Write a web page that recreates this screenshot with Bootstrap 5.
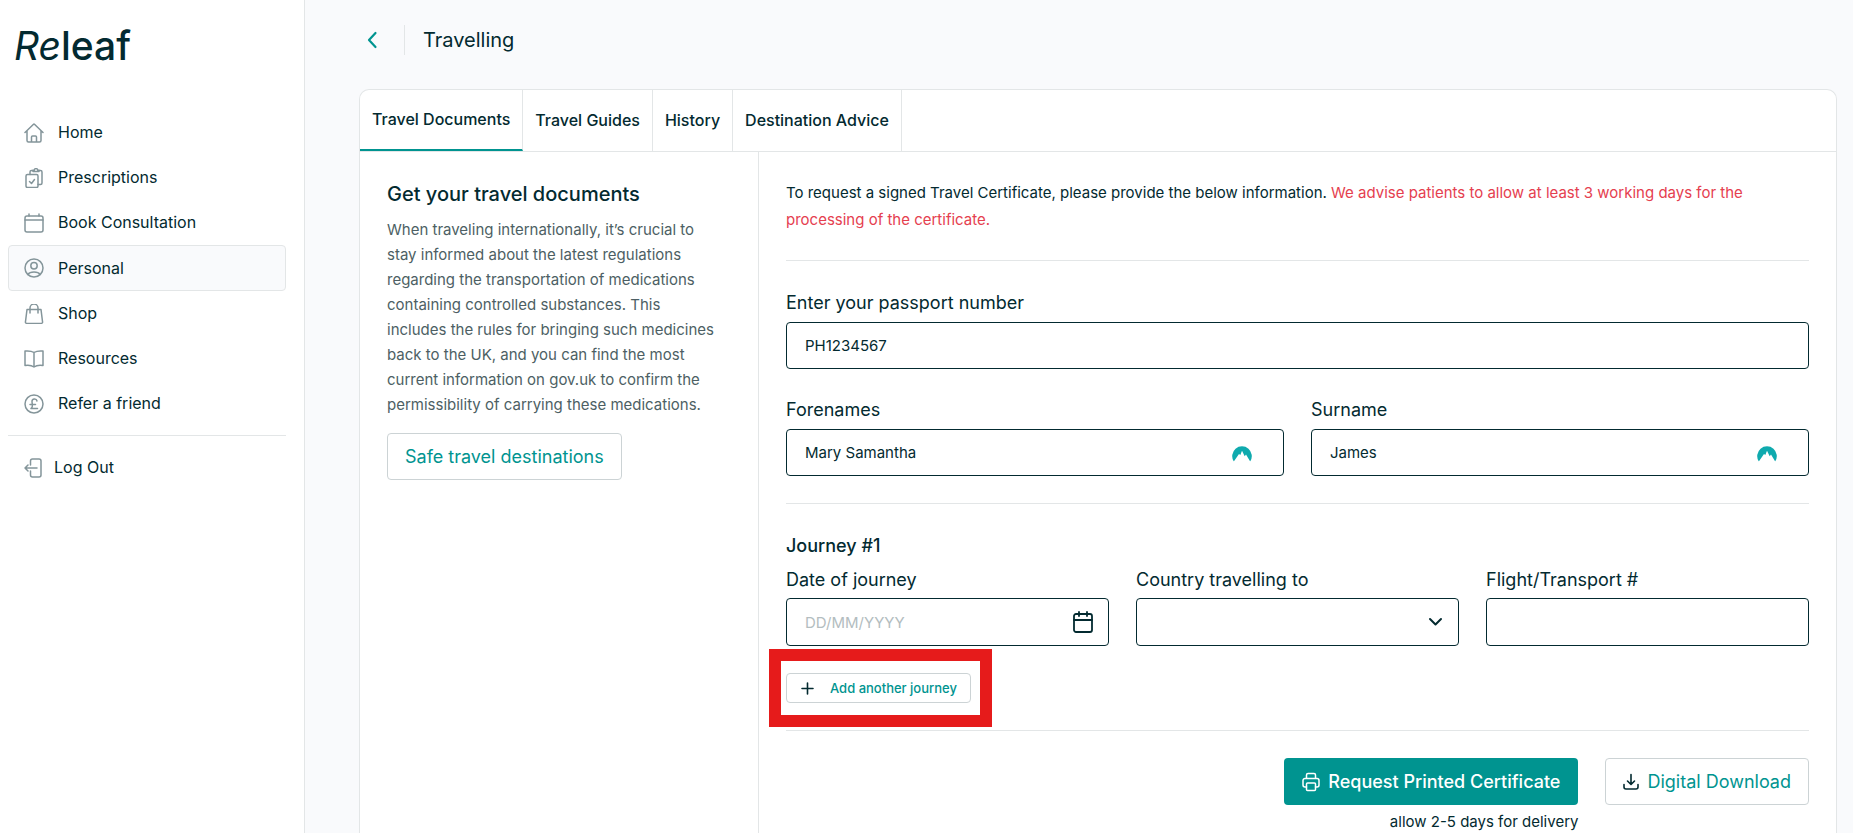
<!DOCTYPE html>
<html lang="en">
<head>
<meta charset="utf-8">
<meta name="viewport" content="width=device-width, initial-scale=1">
<title>Releaf - Travelling</title>
<link href="https://cdn.jsdelivr.net/npm/bootstrap@5.3.0/dist/css/bootstrap.min.css" rel="stylesheet">
<style>
  :root { --ink: #032a30; --teal: #009490; --line: #e3e6e7; --soft: #f9fafc; --gutter: 27px; }
  body { font-family: Inter, "Open Sans", sans-serif; font-size: 15px; line-height: 27px; color: var(--ink); background: var(--soft); }
  svg { display: block; flex: none; fill: none; stroke: currentColor; stroke-linecap: round; stroke-linejoin: round; }
  hr { margin: var(--gutter) 0; border-color: var(--line); opacity: 1; }
  .sidebar { flex: 0 0 305px; border-right: 1px solid var(--line); padding: 24px 18px 0 8px; }
  .logo { font-size: 39px; line-height: 44px; font-weight: 500; padding-left: 6px; margin-bottom: 42px; color: var(--ink); }
  .logo i { font-weight: 400; }
  .side-link { display: flex; align-items: center; gap: 14px; height: 45px; padding: 0 15px; border: 1px solid transparent; border-radius: 4px; color: var(--ink); font-size: 16px; text-decoration: none; }
  .side-link svg { color: #84959a; stroke-width: 1.5; }
  .side-link.active { height: 46px; background: var(--soft); border-color: var(--line); }
  .side-link.logout { gap: 10px; }
  .sidebar hr { margin: 9px 0; }
  .content { overflow: auto; scrollbar-width: none; padding: 24px 16px 0 54px; }
  .page-head { height: 32px; margin-bottom: 33px; }
  .page-head a { color: var(--teal); width: 45px; padding-left: 7px; }
  .page-head h1 { font-size: 20px; line-height: 30px; font-weight: 400; margin: 0; padding-left: 18px; border-left: 1px solid var(--line); }
  .panel { background: #fff; border: 1px solid var(--line); border-bottom: 0; border-radius: 10px 10px 0 0; overflow: hidden; }
  .tabs { border-bottom: 1px solid var(--line); }
  .tabs button { height: 61px; padding: 0 12px; border: 0; border-right: 1px solid var(--line); background: none; color: var(--ink); font-size: 16px; font-weight: 500; }
  .tabs button.active { border-bottom: 2px solid var(--teal); }
  .intro { flex: 0 0 399px; border-right: 1px solid var(--line); padding: var(--gutter) 34px var(--gutter) var(--gutter); }
  .intro h2 { font-size: 20px; line-height: 30px; font-weight: 500; margin: 0 0 8px; }
  .intro p { color: #4d5f64; line-height: 25px; margin-bottom: 16px; }
  .request { padding: var(--gutter); }
  .request p { margin: 0; }
  .warn { color: #e5404f; }
  .request label, .request h3 { display: block; font-size: 18px; line-height: 30px; margin-bottom: 4px; }
  .request h3 { font-weight: 500; }
  .form-row { display: grid; gap: 26px var(--gutter); }
  .form-row.two { grid-template-columns: 1fr 1fr; margin-top: 26px; }
  .form-row.three { grid-template-columns: 1fr 1fr 1fr; }
  .request .three label { margin-bottom: 3px; }
  .field { height: 47px; padding: 0 18px; border: 1px solid var(--ink); border-radius: 4px; color: var(--ink); font-size: 15px; background-image: none; }
  .three .field { height: 48px; }
  .field::placeholder { color: #b3bdc0; }
  .field-icon { position: absolute; right: 32px; top: 50%; transform: translateY(-50%); pointer-events: none; }
  .field-icon.near { right: 16px; }
  .btn { --bs-btn-border-radius: 4px; height: 47px; padding: 0 17px; font-size: 18px; line-height: 27px; }
  .btn-line { color: var(--teal); border-color: #ccd3d5; background: #fff; }
  .btn-line svg { color: var(--ink); }
  .btn-solid { color: #fff; background: var(--teal); font-weight: 500; }
  .btn-add { height: 30px; font-size: 13px; padding: 0 13px 0 14px; font-weight: 500; }
  .add-row { display: flex; margin-top: var(--gutter); }
  .highlight { position: absolute; inset: -24px -21px -24px -17px; border: 12px solid #e61b1b; pointer-events: none; }
  .form-actions { gap: var(--gutter); }
  .note { line-height: 24px; margin-top: 5px; }
</style>
</head>
<body>
<div class="d-flex vh-100 overflow-hidden">
  <aside class="sidebar bg-white">
    <div class="logo"><i>Re</i>leaf</div>
    <nav>
      <a class="side-link" href="#"><svg width="20" height="20" viewBox="0 0 20 20"><path d="M1 9.500 9.300 1.500a1 1 0 0 1 1.400 0L19 9.500M3 8v9.500A1.500 1.500 0 0 0 4.500 19h11a1.500 1.500 0 0 0 1.500-1.500V8M7.500 19v-5a1 1 0 0 1 1-1h3a1 1 0 0 1 1 1v5"/></svg>Home</a>
      <a class="side-link" href="#"><svg width="20" height="20" viewBox="0 0 20 20"><rect x="2" y="6.500" width="12" height="13" rx="1.500"/><path d="m5.500 13.500 2 2 3-4M6 6.500V4a1.500 1.500 0 0 1 1.500-1.500H9M15 2.500h1.500A1.500 1.500 0 0 1 18 4v11a1.500 1.500 0 0 1-1.500 1.500H14"/><path d="M9 3.500V2.300h1.200C10.600 0 13.400 0 13.800 2.300H15v1.200z"/></svg>Prescriptions</a>
      <a class="side-link" href="#"><svg width="20" height="20" viewBox="0 0 20 20"><rect x="1" y="3" width="18" height="16" rx="2"/><path d="M1 7h18M5 1v2M15 1v2"/></svg>Book Consultation</a>
      <a class="side-link active" href="#"><svg width="20" height="20" viewBox="0 0 20 20"><circle cx="10" cy="10" r="9"/><circle cx="10" cy="7.800" r="3.200"/><path d="M4 16.500c2-3.300 10-3.300 12 0"/></svg>Personal</a>
      <a class="side-link" href="#"><svg width="20" height="20" viewBox="0 0 20 20"><path d="M3 5.500h14l1.500 12a1.500 1.500 0 0 1-1.500 2H3a1.500 1.500 0 0 1-1.500-2zM6 9V4a4 4 0 0 1 8 0v5"/></svg>Shop</a>
      <a class="side-link" href="#"><svg width="20" height="20" viewBox="0 0 20 20"><path d="M10 3.500C7.500 1.800 4.500 1.700 1 2v14.500c3.500-.5 6.500-.3 9 1.500 2.500-1.800 5.500-2 9-1.500V2c-3.500-.3-6.500-.2-9 1.500zM10 3.500V18"/></svg>Resources</a>
      <a class="side-link" href="#"><svg width="20" height="20" viewBox="0 0 20 20"><circle cx="10" cy="10" r="9"/><path d="M13 7c-.5-2.700-5-2.700-5 .5 0 2 1.500 5.500-1 7h6.500M6 10.500h5.500"/></svg>Refer a friend</a>
      <hr>
      <a class="side-link logout" href="#"><svg width="20" height="20" viewBox="0 0 20 20"><path d="M6.500 7V3a2 2 0 0 1 2-2H15a2 2 0 0 1 2 2v14a2 2 0 0 1-2 2H8.500a2 2 0 0 1-2-2v-4M13 10H1M4 7l-3 3 3 3"/></svg>Log Out</a>
    </nav>
  </aside>

  <main class="content flex-grow-1 d-flex flex-column">
    <div class="page-head d-flex align-items-center flex-shrink-0">
      <a href="#" aria-label="Back"><svg width="13" height="18" viewBox="0 0 13 18" stroke-width="2.200"><path d="M9.500 2 3 9l6.500 7"/></svg></a>
      <h1>Travelling</h1>
    </div>

    <section class="panel flex-grow-1 flex-shrink-0 d-flex flex-column">
      <div class="tabs d-flex align-items-stretch">
        <button type="button" class="active">Travel Documents</button>
        <button type="button">Travel Guides</button>
        <button type="button">History</button>
        <button type="button">Destination Advice</button>
      </div>
      <div class="d-flex flex-grow-1">
        <div class="intro">
          <h2>Get your travel documents</h2>
          <p>When traveling internationally, it’s crucial to stay informed about the latest regulations regarding the transportation of medications containing controlled substances. This includes the rules for bringing such medicines back to the UK, and you can find the most current information on gov.uk to confirm the permissibility of carrying these medications.</p>
          <button type="button" class="btn btn-line">Safe travel destinations</button>
        </div>
        <form class="request flex-grow-1">
          <p>To request a signed Travel Certificate, please provide the below information. <span class="warn">We advise patients to allow at least 3 working days for the processing of the certificate.</span></p>
          <hr>
          <label for="passport">Enter your passport number</label>
          <input id="passport" class="form-control field" type="text" value="PH1234567">
          <div class="form-row two">
            <div>
              <label for="forenames">Forenames</label>
              <div class="position-relative">
                <input id="forenames" class="form-control field" type="text" value="Mary Samantha">
                <svg class="field-icon" width="20" height="17" viewBox="0 0 20 17"><path fill="#0faaae" stroke="none" d="M1.800 17A9.800 9.800 0 1 1 18.200 17L14 10l-1.300 1.800L10 6.200 8.300 10.500 7 9.500z"/></svg>
              </div>
            </div>
            <div>
              <label for="surname">Surname</label>
              <div class="position-relative">
                <input id="surname" class="form-control field" type="text" value="James">
                <svg class="field-icon" width="20" height="17" viewBox="0 0 20 17"><path fill="#0faaae" stroke="none" d="M1.800 17A9.800 9.800 0 1 1 18.200 17L14 10l-1.300 1.800L10 6.200 8.300 10.500 7 9.500z"/></svg>
              </div>
            </div>
          </div>
          <hr>
          <h3>Journey #1</h3>
          <div class="form-row three">
            <div>
              <label for="date">Date of journey</label>
              <div class="position-relative">
                <input id="date" class="form-control field" type="text" placeholder="DD/MM/YYYY">
                <svg class="field-icon near" width="20" height="22" viewBox="0 0 20 22" stroke-width="1.800"><rect x="1" y="3" width="18" height="18" rx="2"/><path d="M1 9h18M6 1v4M14 1v4"/></svg>
              </div>
            </div>
            <div>
              <label for="country">Country travelling to</label>
              <div class="position-relative">
                <select id="country" class="form-select field"><option></option></select>
                <svg class="field-icon near" width="15" height="10" viewBox="0 0 15 10" stroke-width="2"><path d="m2 2 5.500 5.500L13 2"/></svg>
              </div>
            </div>
            <div>
              <label for="flight">Flight/Transport #</label>
              <input id="flight" class="form-control field" type="text">
            </div>
          </div>
          <div class="add-row">
            <div class="position-relative">
              <button type="button" class="btn btn-line btn-add d-flex align-items-center gap-3"><svg width="13" height="13" viewBox="0 0 13 13" stroke-width="1.600"><path d="M6.500 1v11M1 6.500h11"/></svg>Add another journey</button>
              <div class="highlight"></div>
            </div>
          </div>
          <hr>
          <div class="form-actions d-flex justify-content-end align-items-start">
            <div class="d-flex flex-column align-items-end">
              <button type="submit" class="btn btn-solid d-flex align-items-center gap-2"><svg width="18" height="20" viewBox="0 0 18 20" stroke-width="1.500"><path d="M4.500 6.500V3A1.500 1.500 0 0 1 6 1.500h6A1.500 1.500 0 0 1 13.500 3v3.500M4.500 15H3a2 2 0 0 1-2-2V8.500a2 2 0 0 1 2-2h12a2 2 0 0 1 2 2V13a2 2 0 0 1-2 2h-1.500"/><rect x="4.500" y="11" width="9" height="7.500" rx="1"/></svg>Request Printed Certificate</button>
              <div class="note">allow 2-5 days for delivery</div>
            </div>
            <button type="button" class="btn btn-line d-flex align-items-center gap-2"><svg width="16" height="18" viewBox="0 0 16 18" stroke-width="1.600"><path d="M8 1.500v9.500M4.500 8 8 11.500 11.500 8M1 11.500V14a2 2 0 0 0 2 2h10a2 2 0 0 0 2-2v-2.500"/></svg>Digital Download</button>
          </div>
        </form>
      </div>
    </section>
  </main>
</div>
<script src="https://cdn.jsdelivr.net/npm/bootstrap@5.3.0/dist/js/bootstrap.bundle.min.js"></script>
</body>
</html>
